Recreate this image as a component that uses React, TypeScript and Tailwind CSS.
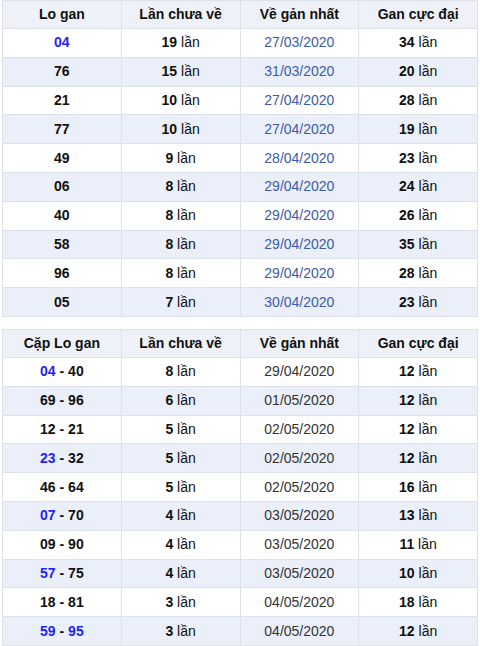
import React from 'react';

type Row = { a: string[]; b: number; date: string; max: number };

// blue numbers marked with *
const logan: Row[] = [
  { a: ['*04'], b: 19, date: '27/03/2020', max: 34 },
  { a: ['76'], b: 15, date: '31/03/2020', max: 20 },
  { a: ['21'], b: 10, date: '27/04/2020', max: 28 },
  { a: ['77'], b: 10, date: '27/04/2020', max: 19 },
  { a: ['49'], b: 9, date: '28/04/2020', max: 23 },
  { a: ['06'], b: 8, date: '29/04/2020', max: 24 },
  { a: ['40'], b: 8, date: '29/04/2020', max: 26 },
  { a: ['58'], b: 8, date: '29/04/2020', max: 35 },
  { a: ['96'], b: 8, date: '29/04/2020', max: 28 },
  { a: ['05'], b: 7, date: '30/04/2020', max: 23 },
];

const cap: Row[] = [
  { a: ['*04', '40'], b: 8, date: '29/04/2020', max: 12 },
  { a: ['69', '96'], b: 6, date: '01/05/2020', max: 12 },
  { a: ['12', '21'], b: 5, date: '02/05/2020', max: 12 },
  { a: ['*23', '32'], b: 5, date: '02/05/2020', max: 12 },
  { a: ['46', '64'], b: 5, date: '02/05/2020', max: 16 },
  { a: ['*07', '70'], b: 4, date: '03/05/2020', max: 13 },
  { a: ['09', '90'], b: 4, date: '03/05/2020', max: 11 },
  { a: ['*57', '75'], b: 4, date: '03/05/2020', max: 10 },
  { a: ['18', '81'], b: 3, date: '04/05/2020', max: 18 },
  { a: ['*59', '*95'], b: 3, date: '04/05/2020', max: 12 },
];

function Num({ v }: { v: string }) {
  const blue = v.startsWith('*');
  return <span className={blue ? 'text-[#1f1fff]' : ''}>{v.replace('*', '')}</span>;
}

function GanTable({ first, rows, dateClass }: { first: string; rows: Row[]; dateClass: string }) {
  return (
    <table className="w-full border-collapse table-fixed text-[14px] text-[#111]">
      <thead>
        <tr className="bg-[#eef1f8] h-[28px]">
          {[first, 'Lần chưa về', 'Về gản nhất', 'Gan cực đại'].map((h) => (
            <th key={h} className="border border-[#dde2ea] p-0 font-bold text-center">
              {h}
            </th>
          ))}
        </tr>
      </thead>
      <tbody>
        {rows.map((r, i) => (
          <tr key={i} className={i % 2 ? 'bg-[#eaeff9] h-[28.8px]' : 'bg-white h-[28.8px]'}>
            <td className="border border-[#dde2ea] p-0 text-center font-bold">
              {r.a.map((v, j) => (
                <React.Fragment key={j}>
                  {j > 0 && ' - '}
                  <Num v={v} />
                </React.Fragment>
              ))}
            </td>
            <td className="border border-[#dde2ea] p-0 text-center">
              <b>{r.b}</b> lần
            </td>
            <td className={`border border-[#dde2ea] p-0 text-center ${dateClass}`}>{r.date}</td>
            <td className="border border-[#dde2ea] p-0 text-center">
              <b>{r.max}</b> lần
            </td>
          </tr>
        ))}
      </tbody>
    </table>
  );
}

export default function App() {
  return (
    <div className="w-[480px] h-[646px] overflow-hidden bg-white px-[2px] font-['Liberation_Sans',Arial,sans-serif]">
      <GanTable first="Lo gan" rows={logan} dateClass="text-[#3b5ba9]" />
      <div className="h-[12px]" />
      <GanTable first="Cặp Lo gan" rows={cap} dateClass="text-[#333]" />
    </div>
  );
}
